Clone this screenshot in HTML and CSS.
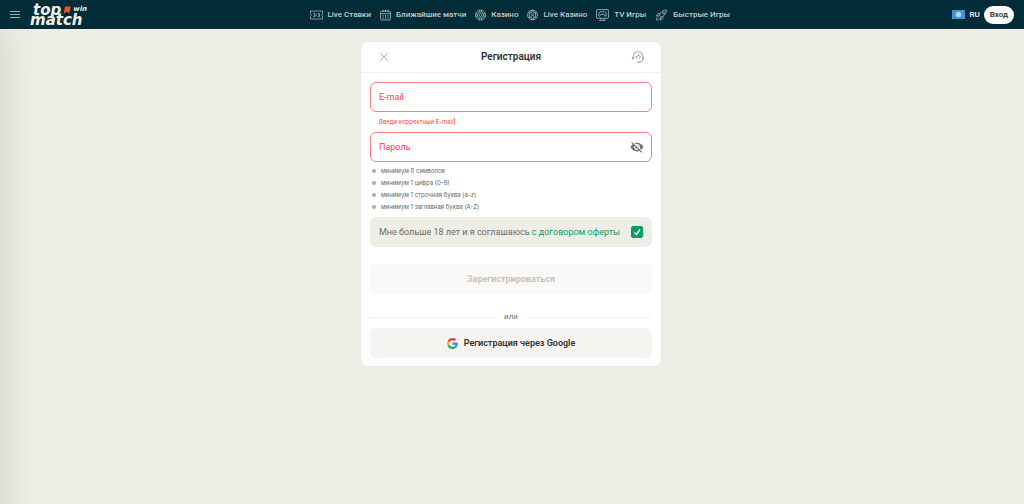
FILE: index.html
```
<!DOCTYPE html>
<html lang="ru">
<head>
    <meta charset="UTF-8">
    <meta name="viewport" content="width=device-width, initial-scale=1.0">
    <title>Регистрация - TopMatch</title>
    <link rel="stylesheet" href="styles.css">
</head>
<body>
    <header class="header">
        <div class="header-left">
            <button type="button" class="menu-button" aria-label="Меню"><span></span><span></span><span></span></button>
            <a href="#" class="logo">
                <span class="logo-row">top
                    <svg class="logo-flag" viewBox="0 0 8 8"><path d="M2 0.5h5.600L6.400 7.500 4.200 5.800 0.800 7.500z" fill="#f4502a"/></svg>
                    <small>win</small>
                </span>
                <span class="logo-row">match</span>
            </a>
        </div>
        <nav class="nav">
            <a href="#">
                <svg class="nav-icon wide" viewBox="0 0 26 20"><path d="M1 2h24v5l-1 1v4l1 1v5H1v-5l1-1V8L1 7z"/><path d="M7 7h3v6H6.500M7.500 10h3M16 7h3v6h-3.500M16.500 10h3M13.200 7.500v1.500M13.200 11v1.500"/></svg>
                Live Ставки
            </a>
            <a href="#">
                <svg class="nav-icon" viewBox="0 0 20 20"><rect x="1" y="3" width="18" height="16" rx="2"/><path d="M1 7.500h18M5.500 0.500v4M10 0.500v4M14.500 0.500v4"/><path d="M4.500 11.500h2M9 11.500h2M13.500 11.500h2M4.500 15.500h2M9 15.500h2M13.500 15.500h2" stroke-width="2"/></svg>
                Ближайшие матчи
            </a>
            <a href="#">
                <svg class="nav-icon" viewBox="0 0 20 20"><circle cx="10" cy="10" r="9"/><circle cx="10" cy="10" r="5.500"/><path d="M10 7l3 3-3 3-3-3z"/><path d="M8 1v3M12 1v3M8 16v3M12 16v3M1 8h3M1 12h3M16 8h3M16 12h3"/></svg>
                Казино
            </a>
            <a href="#">
                <svg class="nav-icon" viewBox="0 0 20 20"><circle cx="10" cy="10" r="9"/><circle cx="10" cy="10" r="6"/><path d="M7 6.500l6 7M13 6.500l-6 7M2.500 5l3 2M17.500 5l-3 2M2.500 15l3-2M17.500 15l-3-2M8.500 1v3M11.500 1v3M8.500 16v3M11.500 16v3"/></svg>
                Live Казино
            </a>
            <a href="#">
                <svg class="nav-icon wide" viewBox="0 0 24 22"><rect x="1" y="1" width="22" height="16" rx="1"/><path d="M6 21h12M9 17v4M15 17v4"/><path d="M8 5h8c2 0 3 3 3 6s-2 3-3 1l-1-2H9l-1 2c-1 2-3 2-3-1s1-6 3-6z"/></svg>
                TV Игры
            </a>
            <a href="#">
                <svg class="nav-icon wide" viewBox="0 0 24 24"><path d="M8 13C10 6 15 2 22 2c0 7-4 12-11 14zM9 9H5l-3 5 6-1M15 15v4l-5 3 1-6"/><circle cx="16" cy="8" r="2"/><path d="M6 15c-3 1-4 4-4 7 3 0 6-1 7-4"/></svg>
                Быстрые Игры
            </a>
        </nav>
        <div class="header-right">
            <button type="button" class="language">
                <svg class="flag" viewBox="0 0 26 18"><rect width="26" height="18" rx="1" fill="#4490df"/><circle cx="13" cy="9" r="5" fill="#8fbdeb" stroke="#d7e8f8"/><path d="M8 9h10M13 4v10M9.500 5.500l7 7M16.500 5.500l-7 7" stroke="#d7e8f8"/></svg>
                RU
            </button>
            <button type="button" class="login">Вход</button>
        </div>
    </header>
    <aside class="drawer"></aside>

    <main class="page">
        <form class="card" novalidate>
            <div class="card-header">
                <button type="button" class="icon-button" aria-label="Закрыть">
                    <svg class="close-icon" viewBox="0 0 14 14"><path d="M3.500 3.500l7 7M10.500 3.500l-7 7"/></svg>
                </button>
                <h1>Регистрация</h1>
                <button type="button" class="icon-button" aria-label="Поддержка">
                    <svg class="support-icon" viewBox="0 0 24 24"><path d="M4 11C4 6 7 3 12 3s8 3 8 8"/><path d="M7 12c3 0 5-2 6-4 1 2 2 3 4 4M20 15c0 4-3 6-7 6"/><path d="M3.500 11v5M20.500 11v5" stroke-width="4"/><path d="M9.500 13v2M14.500 13v2M10.500 21h4" stroke-width="2.500"/></svg>
                </button>
            </div>
            <div class="card-body">
                <div class="field">
                    <input type="email" id="email" placeholder=" " aria-describedby="email-error">
                    <label for="email">E-mail</label>
                </div>
                <p class="field-error" id="email-error"><span>Введи корректный E-mail</span></p>
                <div class="field">
                    <input type="password" id="password" placeholder=" ">
                    <label for="password">Пароль</label>
                    <button type="button" class="show-password" aria-label="Показать пароль">
                        <svg viewBox="0 0 24 24"><path d="M12 7c2.760 0 5 2.240 5 5 0 .650-.130 1.260-.360 1.830l2.920 2.920c1.510-1.260 2.700-2.890 3.430-4.750-1.730-4.390-6-7.500-11-7.500-1.400 0-2.740.250-3.980.700l2.160 2.160C10.740 7.130 11.350 7 12 7zM2 4.270l2.280 2.280.460.460C3.080 8.300 1.780 10.020 1 12c1.730 4.390 6 7.500 11 7.500 1.550 0 3.030-.300 4.380-.840l.420.420L19.730 22 21 20.730 3.270 3 2 4.270zM7.530 9.800l1.550 1.550c-.050.210-.080.430-.080.650 0 1.660 1.340 3 3 3 .220 0 .440-.030.650-.080l1.550 1.550c-.670.330-1.410.530-2.200.530-2.760 0-5-2.240-5-5 0-.790.200-1.530.530-2.200zm4.310-.780l3.150 3.150.020-.160c0-1.660-1.340-3-3-3l-.170.010z"/></svg>
                    </button>
                </div>
                <ul class="rules">
                    <li>минимум 8 символов</li>
                    <li>минимум 1 цифра (0-9)</li>
                    <li>минимум 1 строчная буква (a-z)</li>
                    <li>минимум 1 заглавная буква (A-Z)</li>
                </ul>
                <div class="consent">
                    <label for="consent">Мне больше 18 лет и я соглашаюсь <a href="#">с договором оферты</a></label>
                    <span class="checkbox">
                        <input type="checkbox" id="consent" checked>
                        <svg viewBox="0 0 12 12"><path d="M3.500 6.500l2 2 3.500-5"/></svg>
                    </span>
                </div>
                <button type="submit" class="button submit" disabled>Зарегистрироваться</button>
                <div class="divider">или</div>
                <button type="button" class="button google">
                    <svg viewBox="0 0 48 48"><path fill="#EA4335" d="M24 9.500c3.540 0 6.710 1.220 9.210 3.600l6.850-6.850C35.900 2.380 30.470 0 24 0 14.620 0 6.510 5.380 2.560 13.220l7.980 6.190C12.430 13.720 17.740 9.500 24 9.500z"/><path fill="#4285F4" d="M46.980 24.550c0-1.570-.150-3.090-.380-4.550H24v9.020h12.940c-.580 2.960-2.260 5.480-4.780 7.180l7.730 6c4.510-4.180 7.090-10.360 7.090-17.650z"/><path fill="#FBBC05" d="M10.530 28.590c-.480-1.450-.760-2.990-.760-4.590s.270-3.140.760-4.590l-7.980-6.190C.920 16.460 0 20.120 0 24c0 3.880.920 7.540 2.560 10.780l7.970-6.190z"/><path fill="#34A853" d="M24 48c6.480 0 11.930-2.130 15.890-5.810l-7.730-6c-2.150 1.450-4.920 2.300-8.160 2.300-6.260 0-11.570-4.220-13.470-9.910l-7.980 6.190C6.510 42.620 14.620 48 24 48z"/></svg>
                    Регистрация через Google
                </button>
            </div>
        </form>
    </main>
</body>
</html>
```
FILE: styles.css
```
* {
    box-sizing: border-box;
}

body {
    margin: 0;
    min-height: 100vh;
    font-family: Roboto, 'Liberation Sans', sans-serif;
    font-size: 9px;
    line-height: 12px;
    color: #34322d;
    background-color: #eeeee6;
}

button {
    padding: 0;
    border: none;
    background: none;
    font: inherit;
    color: inherit;
    cursor: pointer;
}

a {
    color: inherit;
    text-decoration: none;
}

svg {
    display: block;
    flex: none;
}

/* Header */
.header {
    position: relative;
    z-index: 2;
    display: flex;
    align-items: center;
    justify-content: space-between;
    height: 29px;
    padding: 0 10px;
    background-color: #022d38;
    color: #fff;
}

.header-left {
    display: flex;
    align-items: center;
    gap: 10px;
}

.menu-button {
    display: flex;
    flex-direction: column;
    gap: 2px;
    width: 10px;
}

.menu-button span {
    height: 1px;
    background-color: #a5b2b5;
}

.logo {
    color: #f1f0e8;
    font: italic bold 15px/10px 'DejaVu Sans', sans-serif;
}

.logo-row {
    display: flex;
    padding-left: 3px;
}

.logo-row + .logo-row {
    padding-left: 0;
}

.logo-flag {
    width: 8px;
    height: 8px;
    margin: 1px 2px 0;
}

.logo small {
    font-size: 7px;
    line-height: 8px;
}

.nav {
    display: flex;
    gap: 9px;
    font-size: 8px;
    font-weight: 500;
    color: #c3cbcc;
}

.nav a {
    display: flex;
    align-items: center;
    gap: 5px;
    white-space: nowrap;
}

.nav-icon {
    width: 11px;
    height: 12px;
    fill: none;
    stroke: #b5bfc1;
    stroke-width: 1.4;
}

.nav-icon.wide {
    width: 13px;
}

.header-right {
    display: flex;
    align-items: center;
    gap: 4px;
}

.language {
    display: flex;
    align-items: center;
    gap: 4px;
    font-size: 8px;
    font-weight: 500;
}

.flag {
    width: 13px;
    height: 9px;
}

.login {
    height: 18px;
    padding: 0 6px;
    border-radius: 9px;
    background-color: #fff;
    color: #34322d;
    font-size: 8px;
    font-weight: 600;
}

/* Closed side menu, only its shadow is visible */
.drawer {
    position: fixed;
    top: 29px;
    bottom: -40px;
    left: -240px;
    width: 240px;
    box-shadow: 0 0 40px rgba(0, 0, 0, 0.14);
}

/* Registration card */
.page {
    display: flex;
    justify-content: center;
    padding: 13px 12px 13px 10px;
}

.card {
    width: 100%;
    max-width: 300px;
    border-radius: 6px;
    background-color: #fff;
    box-shadow: 0 0 1px rgba(0, 0, 0, 0.15);
}

.card-header {
    display: flex;
    align-items: center;
    justify-content: space-between;
    height: 31px;
    padding: 0 16px;
    border-bottom: 1px solid #efefed;
}

.card-header h1 {
    margin: 0;
    font-size: 10px;
    font-weight: 600;
}

.icon-button svg {
    width: 14px;
    height: 14px;
    fill: none;
    stroke: #b2b2b0;
    stroke-width: 2;
}

.icon-button .close-icon {
    stroke-width: 1;
}

.card-body {
    padding: 9px 9px 8px;
}

.field {
    position: relative;
}

.field input {
    display: block;
    width: 100%;
    height: 30px;
    padding: 0 30px 0 8px;
    border: 1px solid #ff7f80;
    border-radius: 6px;
    outline: none;
    background-color: #fff;
    font: inherit;
}

.field label {
    position: absolute;
    top: 9px;
    left: 9px;
    color: #ff4244;
}

.field input:not(:placeholder-shown) + label {
    display: none;
}

.show-password {
    position: absolute;
    top: 8px;
    right: 8px;
}

.show-password svg {
    width: 14px;
    height: 14px;
    fill: #77716a;
}

.field-error {
    margin: 0;
    padding: 5px 9px;
    font-family: Inter, 'Liberation Sans', sans-serif;
    font-size: 6px;
    line-height: 10px;
    color: #ff4244;
}

.field-error span {
    border-right: 1px solid #ff7f80;
}

.rules {
    margin: 0;
    padding: 3px 2px 4px;
    list-style: none;
    font-family: Inter, 'Liberation Sans', sans-serif;
    font-size: 6px;
    color: #67645c;
}

.rules li {
    display: flex;
    align-items: center;
    gap: 5px;
}

.rules li::before {
    content: '';
    width: 4px;
    height: 4px;
    border-radius: 50%;
    background-color: #aaa9a6;
}

.consent {
    display: flex;
    align-items: center;
    justify-content: space-between;
    height: 30px;
    margin-bottom: 17px;
    padding: 0 9px;
    border-radius: 6px;
    background-color: #eeeee6;
    color: #6e695f;
}

.consent a {
    color: #109b68;
}

.checkbox {
    position: relative;
}

.checkbox input {
    display: block;
    width: 12px;
    height: 12px;
    margin: 0;
    appearance: none;
    border: 1px solid #00a066;
    border-radius: 2px;
}

.checkbox input:checked {
    background-color: #00a066;
}

.checkbox svg {
    position: absolute;
    inset: 0;
    fill: none;
    stroke: #fff;
    stroke-width: 1.4;
    pointer-events: none;
}

.button {
    display: flex;
    align-items: center;
    justify-content: center;
    gap: 6px;
    width: 100%;
    height: 30px;
    border-radius: 6px;
    font-weight: 600;
}

.submit {
    background-color: #faf9f8;
    color: #c3c0b6;
    cursor: default;
}

.divider {
    display: flex;
    align-items: center;
    gap: 9px;
    margin: 17px 0 5px;
    font-size: 8px;
    color: #77736b;
}

.divider::before,
.divider::after {
    content: '';
    flex: 1;
    height: 1px;
    background-color: #efefed;
}

.google {
    background-color: #f5f4f1;
}

.google svg {
    width: 11px;
    height: 11px;
}
```
